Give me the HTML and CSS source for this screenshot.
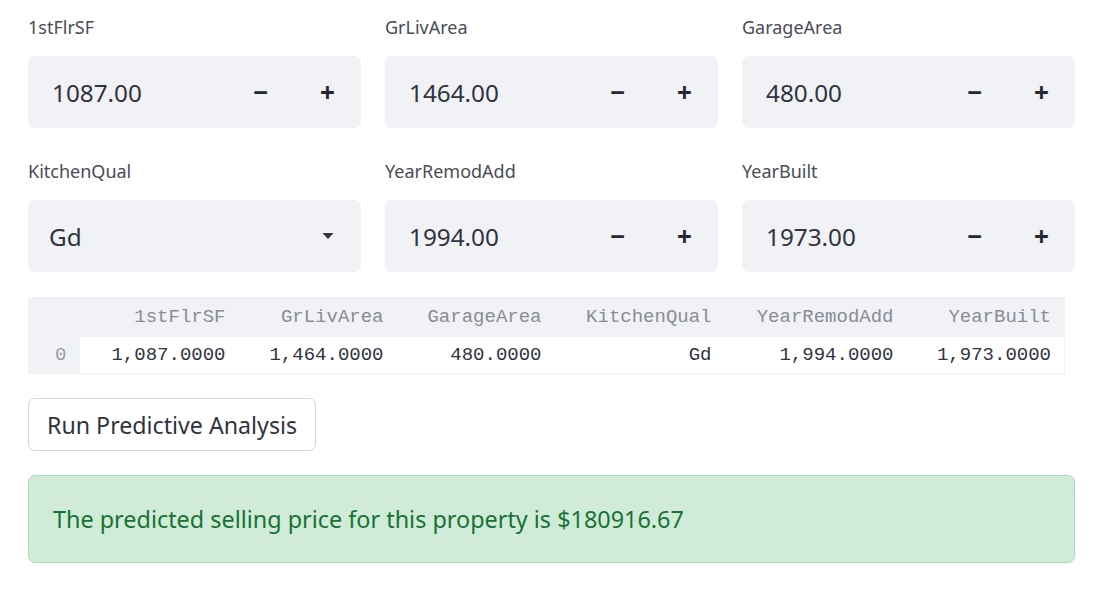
FILE: index.html
```html
<!DOCTYPE html>
<html>
<head>
<meta charset="utf-8">
<link rel="stylesheet" href="styles.css">
</head>
<body>
<main class="page">
  <div class="grid">
    <div class="field">
      <label class="label">1stFlrSF</label>
      <div class="num">
        <div class="num-value">1087.00</div>
        <div class="num-btn">−</div>
        <div class="num-btn">+</div>
      </div>
    </div>
    <div class="field">
      <label class="label">GrLivArea</label>
      <div class="num">
        <div class="num-value">1464.00</div>
        <div class="num-btn">−</div>
        <div class="num-btn">+</div>
      </div>
    </div>
    <div class="field">
      <label class="label">GarageArea</label>
      <div class="num">
        <div class="num-value">480.00</div>
        <div class="num-btn">−</div>
        <div class="num-btn">+</div>
      </div>
    </div>
    <div class="field">
      <label class="label">KitchenQual</label>
      <div class="select">
        <div class="select-value">Gd</div>
        <svg class="caret" width="12" height="8" viewBox="0 0 12 8"><path d="M0.5 1h11L6 7z" fill="#31333f"/></svg>
      </div>
    </div>
    <div class="field">
      <label class="label">YearRemodAdd</label>
      <div class="num">
        <div class="num-value">1994.00</div>
        <div class="num-btn">−</div>
        <div class="num-btn">+</div>
      </div>
    </div>
    <div class="field">
      <label class="label">YearBuilt</label>
      <div class="num">
        <div class="num-value">1973.00</div>
        <div class="num-btn">−</div>
        <div class="num-btn">+</div>
      </div>
    </div>
  </div>

  <table class="df">
    <thead>
      <tr>
        <th class="idx"></th>
        <th>1stFlrSF</th>
        <th>GrLivArea</th>
        <th>GarageArea</th>
        <th>KitchenQual</th>
        <th>YearRemodAdd</th>
        <th>YearBuilt</th>
      </tr>
    </thead>
    <tbody>
      <tr>
        <td class="idx">0</td>
        <td>1,087.0000</td>
        <td>1,464.0000</td>
        <td>480.0000</td>
        <td>Gd</td>
        <td>1,994.0000</td>
        <td>1,973.0000</td>
      </tr>
    </tbody>
  </table>

  <button class="run">Run Predictive Analysis</button>

  <div class="alert">The predicted selling price for this property is $180916.67</div>
</main>
</body>
</html>
```

FILE: styles.css
```css
* { box-sizing: border-box; }
html, body { margin: 0; padding: 0; background: #fff; }
body {
  font-family: "Noto Sans", "Open Sans", sans-serif;
  color: #31333f;
}
.page {
  width: 1047px;
  margin-left: 28px;
  padding-top: 14px;
}
.grid {
  display: grid;
  grid-template-columns: repeat(3, 333px);
  column-gap: 24px;
  row-gap: 30px;
}
.field { display: flex; flex-direction: column; }
.label {
  font-size: 18px;
  line-height: 26px;
  color: #4a4c57;
  margin-bottom: 16px;
}
.num, .select {
  height: 72px;
  background: #f0f2f6;
  border-radius: 7px;
  display: flex;
  align-items: center;
}
.num-value {
  flex: 1;
  padding-left: 24px;
  font-size: 24.3px;
}
.num-btn {
  width: 67px;
  text-align: center;
  font-size: 26px;
  font-weight: 700;
  color: #262730;
}
.select-value {
  flex: 1;
  padding-left: 21px;
  font-size: 24.3px;
}
.caret { margin-right: 27px; }

.df {
  margin-top: 25px;
  border-collapse: collapse;
  table-layout: fixed;
  width: 1036px;
  font-family: "Liberation Mono", "DejaVu Sans Mono", monospace;
  font-size: 19px;
  border: 1px solid #f0f2f6;
}
.df th, .df td {
  text-align: right;
  padding: 0 13px;
  font-weight: 400;
  white-space: nowrap;
}
.df th {
  height: 39px;
  background: #f0f2f6;
  color: #8a8c94;
}
.df td { height: 37px; color: #31333f; }
.df .idx {
  background: #f0f2f6;
  color: #9a9ca3;
  width: 51px;
}
.df th:nth-child(2), .df td:nth-child(2) { width: 159px; }
.df th:nth-child(3), .df td:nth-child(3) { width: 158px; }
.df th:nth-child(4), .df td:nth-child(4) { width: 158px; }
.df th:nth-child(5), .df td:nth-child(5) { width: 170px; }
.df th:nth-child(6), .df td:nth-child(6) { width: 182px; }
.df th:nth-child(7), .df td:nth-child(7) { width: 158px; }

.run {
  display: block;
  margin-top: 24px;
  height: 53px;
  padding: 0 18px;
  background: #fff;
  border: 1px solid #d3d4d8;
  border-radius: 7px;
  font-family: "Noto Sans", "Open Sans", sans-serif;
  font-size: 23.2px;
  color: #31333f;
}
.alert {
  margin-top: 24px;
  height: 88px;
  background: #d0ecd9;
  border: 1px solid #a9dfb8;
  border-radius: 7px;
  color: #177233;
  font-size: 23.4px;
  display: flex;
  align-items: center;
  padding-left: 24px;
}
```
